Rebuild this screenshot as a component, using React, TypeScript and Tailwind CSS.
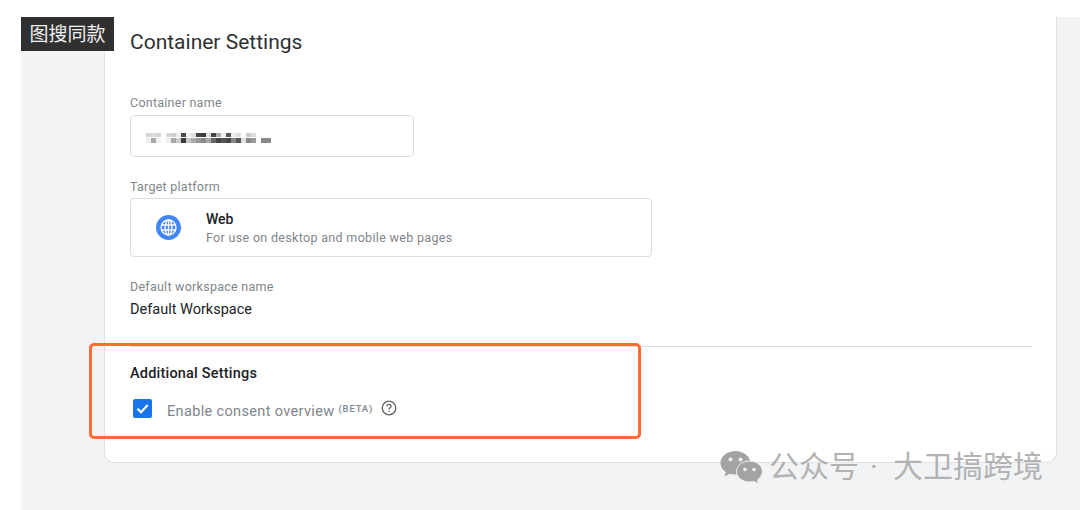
// pixelated (mosaic) container name: [top cell, bottom cell] per 5px column
const mosaic: [string, string][] = [
  ['#d4d4d4', '#eeeeee'], ['#dddddd', '#a8a8a8'], ['#d8d8d8', '#f2f2f2'], ['#ffffff', '#ffffff'],
  ['#d8d8d8', '#f0f0f0'], ['#d0d0d0', '#a8a8a8'], ['#eeeeee', '#cccccc'], ['#4a4a4a', '#3a3a3a'],
  ['#f0f0f0', '#c8c8c8'], ['#dddddd', '#aaaaaa'], ['#444444', '#999999'], ['#3a3a3a', '#888888'],
  ['#dddddd', '#aaaaaa'], ['#444444', '#666666'], ['#aaaaaa', '#444444'], ['#eeeeee', '#555555'],
  ['#555555', '#444444'], ['#eeeeee', '#888888'], ['#dddddd', '#555555'], ['#ffffff', '#dddddd'],
  ['#cccccc', '#888888'], ['#dddddd', '#999999'], ['#ffffff', '#ffffff'], ['#ffffff', '#888888'],
  ['#ffffff', '#888888'],
];

function WeChatIcon() {
  return (
    <svg width="43" height="34" viewBox="0 0 43 34" className="shrink-0">
      <path d="M15.5 1C7.2 1 .5 6.3.5 13c0 3.700 2.100 7 5.400 9.200L4.600 26.500l5.200-2.700c1.800.5 3.700.8 5.700.8 8.300 0 15-5.300 15-11.600S23.800 1 15.500 1Z" fill="#a3a3a3" />
      <path d="M29.500 11c-7.200 0-13 4.700-13 10.500S22.300 32 29.500 32c1.500 0 3-.2 4.300-.6l4.700 2.400-1-3.900c3-1.900 4.900-5 4.900-8.400C42.500 15.700 36.700 11 29.500 11Z" fill="#a3a3a3" stroke="#f1f3f4" strokeWidth="1" />
      <circle cx="10.500" cy="9.500" r="2" fill="#f4f4f4" />
      <circle cx="20.500" cy="9.500" r="2" fill="#f4f4f4" />
      <circle cx="25" cy="19.500" r="1.700" fill="#f4f4f4" />
      <circle cx="34" cy="19.500" r="1.700" fill="#f4f4f4" />
    </svg>
  );
}

function GlobeIcon() {
  return (
    <svg width="17" height="17" viewBox="0 0 17 17" fill="none" stroke="#ffffff" strokeWidth="1.300">
      <circle cx="8.500" cy="8.500" r="7.500" />
      <ellipse cx="8.500" cy="8.500" rx="3.400" ry="7.500" />
      <path d="M8.500 1v15M1.500 6h14M1.500 11h14" />
    </svg>
  );
}

function CheckIcon() {
  return (
    <svg width="15" height="15" viewBox="0 0 15 15" fill="none" stroke="#ffffff" strokeWidth="2.200">
      <path d="M2.500 7.800 6 11.200 12.700 4" />
    </svg>
  );
}

function HelpIcon() {
  return (
    <svg width="16" height="16" viewBox="0 0 16 16" fill="none" stroke="#5f6368" strokeWidth="1.300" className="ml-[8px]">
      <circle cx="8" cy="8" r="6.800" />
      <path d="M5.900 6.300c0-1.200.9-2 2.100-2s2.100.8 2.100 1.900c0 1.500-2.100 1.600-2.100 3.300" />
      <path d="M8 10.700v1.400" />
    </svg>
  );
}

export default function App() {
  return (
    <div className="relative flex h-[510px] w-[1080px] flex-col overflow-hidden bg-white pl-[21px] pt-[17px] font-['Roboto','Noto_Sans_CJK_SC',sans-serif]">
      {/* page background */}
      <div className="h-[493px] bg-[#f1f3f4] pl-[83px] pr-[23px]">
        <div className="h-[446px] rounded-b-[10px] border-x border-b border-[#dfe1e5] bg-white pl-[25px] pr-[24px]">
          <h1 className="pt-[10px] text-[21px] leading-[30px] text-[#2f3133]">Container Settings</h1>

          <p className="mt-[37px] text-[12.500px] leading-[18px] tracking-[0.25px] text-[#80868b]">Container name</p>
          <div className="mt-[3px] flex h-[42px] w-[284px] items-center rounded-[4px] border border-[#dadce0] pl-[15px]">
            <div className="mt-[3px] grid grid-flow-col grid-rows-2 blur-[0.7px]">
              {mosaic.map(([top, bottom], i) => [
                <span key={`${i}t`} className="h-[4px] w-[5px]" style={{ backgroundColor: top }} />,
                <span key={`${i}b`} className="h-[5px] w-[5px]" style={{ backgroundColor: bottom }} />,
              ])}
            </div>
          </div>

          <p className="mt-[21px] text-[12.500px] leading-[18px] tracking-[0.25px] text-[#80868b]">Target platform</p>
          <div className="mt-[2px] flex h-[59px] w-[522px] items-center rounded-[4px] border border-[#dadce0] pl-[25px]">
            <div className="flex h-[25px] w-[25px] items-center justify-center rounded-full bg-[#4285f4]">
              <GlobeIcon />
            </div>
            <div className="ml-[25px]">
              <p className="text-[14px] font-medium leading-[19px] text-[#202124]">Web</p>
              <p className="text-[12.500px] leading-[17px] tracking-[0.32px] text-[#80868b]">For use on desktop and mobile web pages</p>
            </div>
          </div>

          <p className="mt-[21px] text-[12.500px] leading-[18px] tracking-[0.25px] text-[#80868b]">Default workspace name</p>
          <p className="mt-[3px] text-[14.500px] leading-[22px] text-[#202124]">Default Workspace</p>

          <div className="mt-[25px] border-t border-[#dadce0]" />

          <p className="mt-[17px] text-[14.500px] font-medium leading-[20px] tracking-[0.2px] text-[#202124]">Additional Settings</p>
          <div className="mt-[10px] flex items-center pl-[3px]">
            <span className="flex h-[19px] w-[19px] items-center justify-center rounded-[2px] bg-[#1a73e8]">
              <CheckIcon />
            </span>
            <span className="ml-[15px] mt-[8px] text-[14.500px] leading-[20px] tracking-[0.35px] text-[#80868b]">Enable consent overview</span>
            <span className="ml-[4px] mt-[2px] text-[9.500px] font-medium leading-[12px] tracking-[0.8px] text-[#80868b]">(BETA)</span>
            <HelpIcon />
          </div>
        </div>
      </div>

      {/* overlays: image search badge, annotation box, watermark */}
      <div className="absolute left-[21px] top-[17px] flex h-[34px] w-[93px] items-center justify-center bg-[#2f302f] pt-[2px] text-[19px] text-[#f0f0f0]">图搜同款</div>
      <div className="absolute left-[89px] top-[343px] h-[96px] w-[552px] rounded-[5px] border-[3px] border-[#ff6b35]" />
      <div className="absolute left-[720px] top-[449px] flex items-center text-[30px] leading-[34px] text-[#a9a9a9]/90">
        <WeChatIcon />
        <span className="ml-[6px] mt-[1px]">公众号</span>
        <span className="ml-[11px] mt-[1px] w-[12px]">·</span>
        <span className="ml-[11px] mt-[1px]">大卫搞跨境</span>
      </div>
    </div>
  );
}
